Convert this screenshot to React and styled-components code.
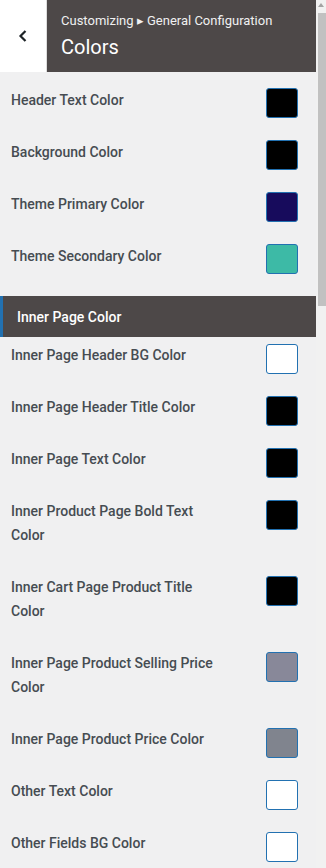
import React from 'react';
import styled, { createGlobalStyle } from 'styled-components';

const GlobalStyle = createGlobalStyle`
  html, body {
    margin: 0;
    padding: 0;
    background: #f0f0f1;
    font-family: Roboto, "Liberation Sans", Arial, sans-serif;
  }
`;

const Shell = styled.div`
  display: flex;
  width: 326px;
  height: 868px;
  overflow: hidden;
  background: #f0f0f1;
`;

const Main = styled.div`
  width: 316px;
  display: flex;
  flex-direction: column;
`;

const Header = styled.div`
  display: flex;
  height: 72px;
  flex-shrink: 0;
`;

const BackButton = styled.div`
  width: 46px;
  background: #fff;
  border-right: 1px solid #ddd;
  display: flex;
  align-items: center;
  justify-content: center;
  svg {
    width: 16px;
    height: 16px;
  }
`;

const TitleBlock = styled.div`
  flex: 1;
  background: #4d4848;
  color: #fff;
  padding: 13px 0 0 14px;
`;

const Crumb = styled.div`
  font-size: 13px;
  line-height: 16px;
  color: #f0f0f1;
`;

const Title = styled.div`
  font-size: 20px;
  line-height: 26px;
  margin-top: 5px;
`;

const Body = styled.div`
  padding-top: 16px;
`;

const Row = styled.div`
  display: flex;
  align-items: flex-start;
  justify-content: space-between;
  padding: 0 18px 0 11px;
`;

const Label = styled.div`
  width: 212px;
  font-size: 14px;
  font-weight: 500;
  line-height: 24px;
  color: #464c52;
  padding-bottom: 28px;
`;

const Swatch = styled.div`
  width: 30px;
  height: 28px;
  margin-top: ${p => p.$offset || 0}px;
  border: 1px solid #2271b1;
  border-radius: 3px;
  box-sizing: content-box;
  background: ${p => p.$color};
`;

const SectionBar = styled.div`
  height: 41px;
  background: #4d4848;
  border-left: 3px solid #2271b1;
  color: #fff;
  font-size: 14px;
  font-weight: 500;
  display: flex;
  align-items: center;
  padding-left: 14px;
  margin-bottom: 6px;
`;

const ScrollTrack = styled.div`
  width: 10px;
  background: #f1f1f1;
  display: flex;
  flex-direction: column;
  align-items: flex-end;
`;

const ScrollArrow = styled.div`
  width: 0;
  height: 0;
  margin: 3px 2px 0 0;
  border-left: 3px solid transparent;
  border-right: 3px solid transparent;
  border-bottom: 4px solid #a3a3a3;
`;

const ScrollThumb = styled.div`
  width: 8px;
  height: 293px;
  margin-top: 6px;
  background: #c1c1c1;
`;

const topColors = [
  { label: 'Header Text Color', color: '#000000' },
  { label: 'Background Color', color: '#000000' },
  { label: 'Theme Primary Color', color: '#170b5c' },
  { label: 'Theme Secondary Color', color: '#3dbaa6' },
];

const innerColors = [
  { label: 'Inner Page Header BG Color', color: '#ffffff' },
  { label: 'Inner Page Header Title Color', color: '#000000' },
  { label: 'Inner Page Text Color', color: '#000000' },
  { label: 'Inner Product Page Bold Text Color', color: '#000000' },
  { label: 'Inner Cart Page Product Title Color', color: '#000000' },
  { label: 'Inner Page Product Selling Price Color', color: '#888899' },
  { label: 'Inner Page Product Price Color', color: '#80848e' },
  { label: 'Other Text Color', color: '#ffffff' },
  { label: 'Other Fields BG Color', color: '#ffffff' },
];

function ColorRow({ item, offset }) {
  return (
    <Row>
      <Label>{item.label}</Label>
      <Swatch $color={item.color} $offset={offset} />
    </Row>
  );
}

export default function App() {
  return (
    <>
      <GlobalStyle />
      <Shell>
        <Main>
          <Header>
            <BackButton>
              <svg viewBox="0 0 16 16" fill="none" stroke="#1d2327" strokeWidth="2.2">
                <path d="M10.5 3 L5.5 8 L10.5 13" />
              </svg>
            </BackButton>
            <TitleBlock>
              <Crumb>Customizing ▸ General Configuration</Crumb>
              <Title>Colors</Title>
            </TitleBlock>
          </Header>
          <Body>
            {topColors.map(item => (
              <ColorRow key={item.label} item={item} />
            ))}
            <SectionBar>Inner Page Color</SectionBar>
            {innerColors.map(item => (
              <ColorRow key={item.label} item={item} offset={1} />
            ))}
          </Body>
        </Main>
        <ScrollTrack>
          <ScrollArrow />
          <ScrollThumb />
        </ScrollTrack>
      </Shell>
    </>
  );
}
